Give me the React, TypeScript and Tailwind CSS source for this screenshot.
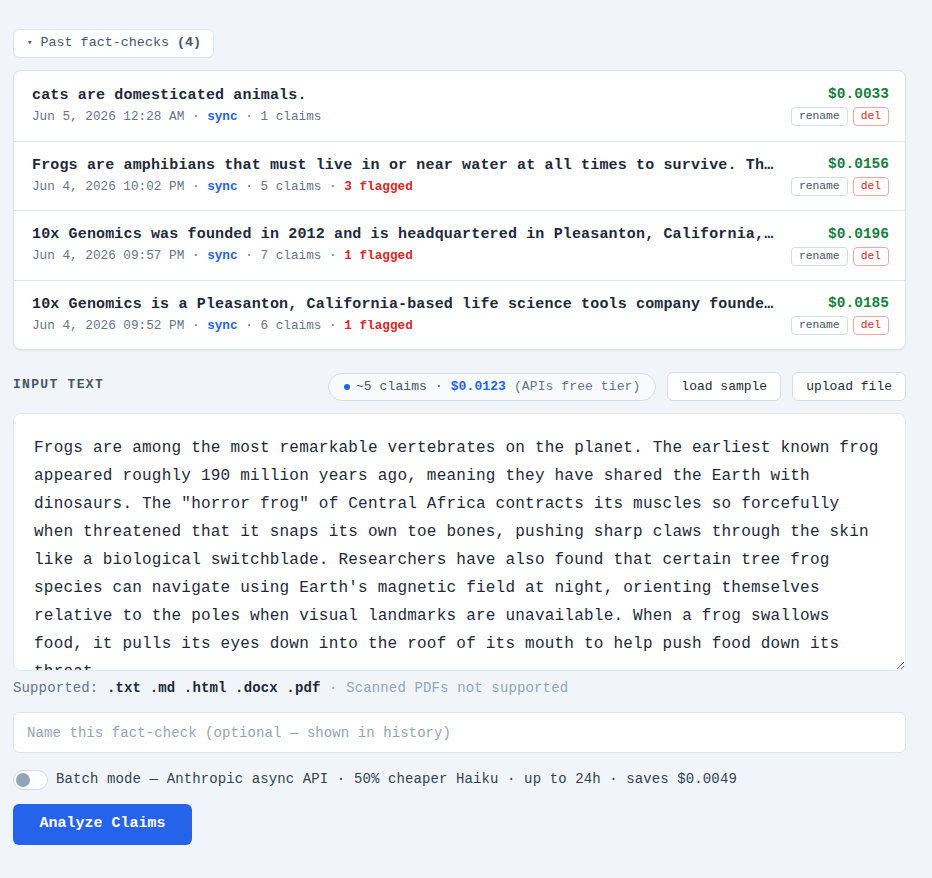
import React, { useState } from "react";

const history = [
  {
    title: "cats are domesticated animals.",
    date: "Jun 5, 2026 12:28 AM",
    claims: 1,
    flagged: 0,
    cost: "$0.0033",
  },
  {
    title:
      "Frogs are amphibians that must live in or near water at all times to survive. They breathe through their skin.",
    date: "Jun 4, 2026 10:02 PM",
    claims: 5,
    flagged: 3,
    cost: "$0.0156",
  },
  {
    title:
      "10x Genomics was founded in 2012 and is headquartered in Pleasanton, California, United States.",
    date: "Jun 4, 2026 09:57 PM",
    claims: 7,
    flagged: 1,
    cost: "$0.0196",
  },
  {
    title:
      "10x Genomics is a Pleasanton, California-based life science tools company founded in 2012.",
    date: "Jun 4, 2026 09:52 PM",
    claims: 6,
    flagged: 1,
    cost: "$0.0185",
  },
];

const SAMPLE =
  'Frogs are among the most remarkable vertebrates on the planet. The earliest known frog appeared roughly 190 million years ago, meaning they have shared the Earth with dinosaurs. The "horror frog" of Central Africa contracts its muscles so forcefully when threatened that it snaps its own toe bones, pushing sharp claws through the skin like a biological switchblade. Researchers have also found that certain tree frog species can navigate using Earth\'s magnetic field at night, orienting themselves relative to the poles when visual landmarks are unavailable. When a frog swallows food, it pulls its eyes down into the roof of its mouth to help push food down its throat.';

const App = () => {
  const [open, setOpen] = useState(true);
  const [text, setText] = useState(SAMPLE);
  const [batch, setBatch] = useState(false);

  return (
    <div className="min-h-[878px] bg-[#f1f5f9] pl-[13px] pr-[26px] pt-[29px] pb-8 font-['Liberation_Mono',monospace] text-[#1e293b]">
      {/* history toggle */}
      <button
        onClick={() => setOpen(!open)}
        className="flex h-[29px] items-center gap-2 rounded-md border border-[#dde3ea] bg-white pl-[13px] pr-3 text-[13.4px] text-[#475569]"
      >
        <span className="text-[9px]">▾</span>
        <span>
          Past fact-checks <span className="font-bold">(4)</span>
        </span>
      </button>

      {open && (
        <div className="mt-3 overflow-hidden rounded-lg border border-[#dde3ea] bg-white shadow-[0_1px_2px_rgba(15,23,42,0.06)]">
          {history.map((h, i) => (
            <div
              key={i}
              className={`flex h-[69.5px] items-center gap-4 pl-[18px] pr-4 ${
                i > 0 ? "border-t border-[#e2e8f0]" : ""
              }`}
            >
              <div className="min-w-0 flex-1">
                <div className="truncate text-[15px] font-bold leading-[22px] tracking-[0.15px] text-[#1e293b]">
                  {h.title}
                </div>
                <div className="text-[12.7px] leading-[20px] text-[#64748b]">
                  {h.date} · <span className="font-bold text-[#2563eb]">sync</span> · {h.claims} claims
                  {h.flagged > 0 && (
                    <>
                      {" "}
                      · <span className="font-bold text-[#dc2626]">{h.flagged} flagged</span>
                    </>
                  )}
                </div>
              </div>
              <div className="flex shrink-0 flex-col items-end gap-[4px]">
                <div className="text-[14.5px] font-bold leading-[18px] text-[#15803d]">{h.cost}</div>
                <div className="flex gap-[5px]">
                  <button className="h-[19px] rounded-[4px] border border-[#d5dce4] px-[7px] text-[11.3px] leading-none text-[#475569]">
                    rename
                  </button>
                  <button className="h-[19px] rounded-[4px] border border-[#f3a5a5] px-[7px] text-[11.3px] leading-none text-[#dc2626]">
                    del
                  </button>
                </div>
              </div>
            </div>
          ))}
        </div>
      )}

      {/* input header */}
      <div className="mt-[22px] flex items-center justify-between">
        <div className="mb-1 text-[13px] font-bold tracking-[1.3px] text-[#475569]">INPUT TEXT</div>
        <div className="flex items-center gap-[11px]">
          <div className="flex h-[28px] items-center gap-[6px] rounded-full border border-[#d5dce4] bg-[#f8fafc] pl-[15px] pr-[15px] text-[13px] tracking-[0.1px] text-[#475569]">
            <span className="h-[6px] w-[6px] rounded-full bg-[#2563eb]" />
            <span>
              ~5 claims · <span className="font-bold text-[#2563eb]">$0.0123</span>{" "}
              <span className="text-[#64748b]">(APIs free tier)</span>
            </span>
          </div>
          <button className="h-[29px] rounded-md border border-[#d5dce4] bg-white px-[13px] text-[13px] text-[#1e293b]">
            load sample
          </button>
          <button className="h-[29px] rounded-md border border-[#d5dce4] bg-white px-[13px] text-[13px] text-[#1e293b]">
            upload file
          </button>
        </div>
      </div>

      <textarea
        value={text}
        onChange={(e) => setText(e.target.value)}
        className="mt-3 block h-[258px] w-full resize-y overflow-hidden rounded-lg border border-[#e2e8f0] bg-white px-5 py-5 text-[16px] leading-[1.75] tracking-[0.22px] text-[#1e293b] outline-none"
      />

      <div className="mt-2 text-[14px] leading-[18px] tracking-[0.14px] text-[#64748b]">
        Supported: <span className="font-bold text-[#1e293b]">.txt .md .html .docx .pdf</span>{" "}
        <span className="text-[#94a3b8]">· Scanned PDFs not supported</span>
      </div>

      <input
        placeholder="Name this fact-check (optional — shown in history)"
        className="mt-[15px] block h-[41px] w-full rounded-md border border-[#dde3ea] bg-white px-[13px] text-[14px] tracking-[0.08px] text-[#1e293b] outline-none placeholder:text-[#94a3b8]"
      />

      {/* batch toggle */}
      <label className="mt-4 flex cursor-pointer items-center gap-2 text-[14px] tracking-[0.11px] text-[#334155]">
        <button
          onClick={() => setBatch(!batch)}
          className={`flex h-[20px] w-[35px] items-center rounded-full border px-[2px] ${
            batch ? "justify-end border-[#2563eb] bg-[#2563eb]" : "border-[#d5dce4] bg-white"
          }`}
        >
          <span className={`h-[14px] w-[14px] rounded-full ${batch ? "bg-white" : "bg-[#94a3b8]"}`} />
        </button>
        <span>Batch mode — Anthropic async API · 50% cheaper Haiku · up to 24h · saves $0.0049</span>
      </label>

      <button className="mt-[14px] h-[41px] w-[179px] rounded-md bg-[#2563eb] text-[15px] font-bold text-white">
        Analyze Claims
      </button>
    </div>
  );
};

export default App;
